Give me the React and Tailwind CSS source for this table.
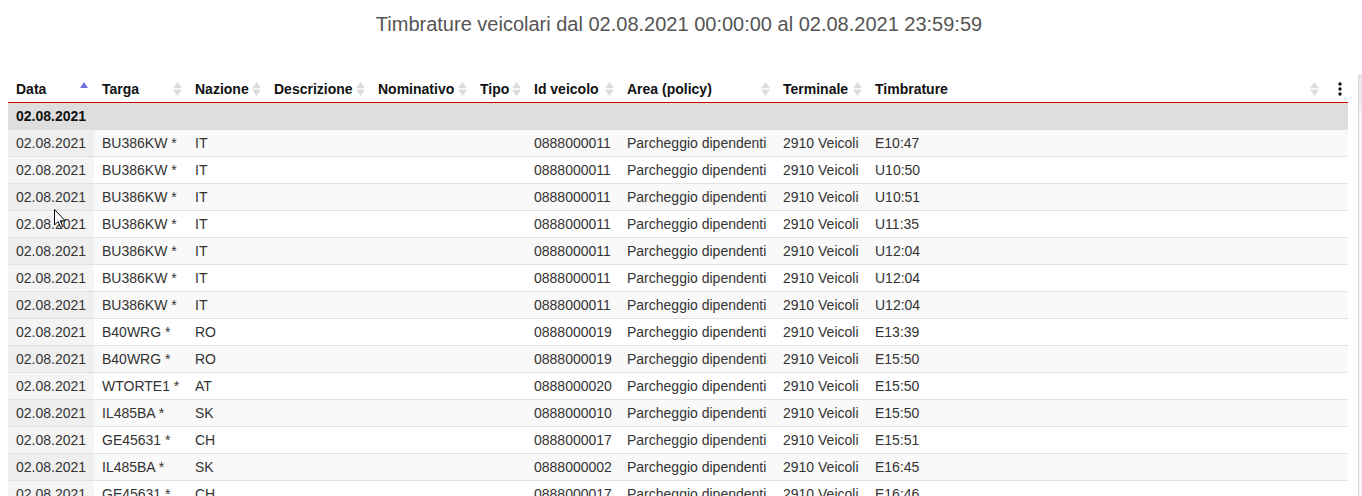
const columns = [
  { key: "data", label: "Data", w: 86, sorted: true },
  { key: "targa", label: "Targa", w: 93 },
  { key: "nazione", label: "Nazione", w: 79 },
  { key: "descrizione", label: "Descrizione", w: 104 },
  { key: "nominativo", label: "Nominativo", w: 102 },
  { key: "tipo", label: "Tipo", w: 54 },
  { key: "id", label: "Id veicolo", w: 93 },
  { key: "area", label: "Area (policy)", w: 156 },
  { key: "terminale", label: "Terminale", w: 92 },
  { key: "timbrature", label: "Timbrature", w: 457 },
];

const rows = [
  ["BU386KW *", "IT", "0888000011", "E10:47"],
  ["BU386KW *", "IT", "0888000011", "U10:50"],
  ["BU386KW *", "IT", "0888000011", "U10:51"],
  ["BU386KW *", "IT", "0888000011", "U11:35"],
  ["BU386KW *", "IT", "0888000011", "U12:04"],
  ["BU386KW *", "IT", "0888000011", "U12:04"],
  ["BU386KW *", "IT", "0888000011", "U12:04"],
  ["B40WRG *", "RO", "0888000019", "E13:39"],
  ["B40WRG *", "RO", "0888000019", "E15:50"],
  ["WTORTE1 *", "AT", "0888000020", "E15:50"],
  ["IL485BA *", "SK", "0888000010", "E15:50"],
  ["GE45631 *", "CH", "0888000017", "E15:51"],
  ["IL485BA *", "SK", "0888000002", "E16:45"],
  ["GE45631 *", "CH", "0888000017", "E16:46"],
];

const gridCols = "grid grid-cols-[86px_93px_79px_104px_102px_54px_93px_156px_92px_457px_24px]";

const SortIcon = ({ active }) =>
  active ? (
    <svg width="8" height="12" viewBox="0 0 8 12" className="absolute right-[6px] top-[6px]">
      <path d="M4 0 L8 6 L0 6 Z" fill="#7173dd" />
    </svg>
  ) : (
    <svg width="9" height="14" viewBox="0 0 9 14" className="absolute right-[5px] top-[6px]">
      <path d="M4.5 0 L9 6.3 L0 6.3 Z" fill="#dcdcdc" />
      <path d="M0 7.7 L9 7.7 L4.5 14 Z" fill="#dcdcdc" />
    </svg>
  );

const Cursor = () => (
  <svg width="13" height="20" viewBox="0 0 13 20" className="absolute left-[54px] top-[209px]">
    <path d="M0.5 0.5 L0.5 16 L4 12.5 L6.5 18.5 L8.8 17.5 L6.3 11.8 L11.2 11.8 Z" fill="#fff" stroke="#000" strokeWidth="1" strokeLinejoin="round" />
  </svg>
);

export default function App() {
  return (
    <div className="relative h-[496px] w-[1362px] overflow-hidden bg-white font-['Liberation_Sans',Arial,sans-serif] text-[14px] text-[#333]">
      <div className="flex">
        <div className="w-[1358px]">
          {/* Title */}
          <h1 className="pt-[13px] text-center text-[20px] leading-[23px] text-[#555] font-normal">
            Timbrature veicolari dal 02.08.2021 00:00:00 al 02.08.2021 23:59:59
          </h1>

          {/* Table */}
          <div className="ml-[8px] mt-[40px] w-[1340px]">
            <div className={`${gridCols} h-[27px] border-b border-[#c80000] font-bold text-[#111] items-center`}>
              {columns.map((c) => (
                <div key={c.key} className="relative h-full flex items-center px-2 whitespace-nowrap overflow-visible">
                  {c.label}
                  <SortIcon active={c.sorted} />
                </div>
              ))}
              <div className="flex h-full items-center justify-end pr-[6px]">
                <svg width="4" height="14" viewBox="0 0 4 14">
                  <circle cx="2" cy="2" r="1.7" fill="#111" />
                  <circle cx="2" cy="7" r="1.7" fill="#111" />
                  <circle cx="2" cy="12" r="1.7" fill="#111" />
                </svg>
              </div>
            </div>

            <div className="h-[27px] bg-[#dedede] flex items-center px-2 font-bold text-[#111]">02.08.2021</div>

            {rows.map((r, i) => {
              const odd = i % 2 === 0;
              return (
                <div
                  key={i}
                  className={`${gridCols} h-[27px] border-b border-[#e2e2e2] items-center ${odd ? "bg-[#f9f9f9]" : "bg-white"}`}
                >
                  <div className={`h-full flex items-center px-2 ${odd ? "bg-[#efefef]" : "bg-[#f4f4f4]"}`}>02.08.2021</div>
                  <div className="px-2 whitespace-nowrap">{r[0]}</div>
                  <div className="px-2">{r[1]}</div>
                  <div className="px-2"></div>
                  <div className="px-2"></div>
                  <div className="px-2"></div>
                  <div className="px-2">{r[2]}</div>
                  <div className="px-2 whitespace-nowrap">Parcheggio dipendenti</div>
                  <div className="px-2 whitespace-nowrap">2910 Veicoli</div>
                  <div className="px-2">{r[3]}</div>
                  <div></div>
                </div>
              );
            })}
          </div>
        </div>

        {/* Scrollbar */}
        <div className="mt-[75px] w-[4px] h-[430px] border-l border-t border-[#d6d6d6] bg-[#f7f7f7]">
          <div className="h-[35px] bg-[#ececec]"></div>
        </div>
      </div>
      <Cursor />
    </div>
  );
}
